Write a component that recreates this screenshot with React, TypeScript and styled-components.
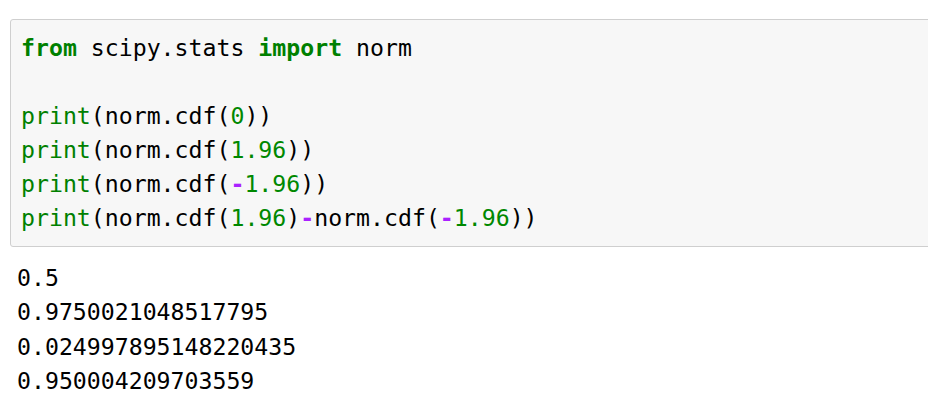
import React from "react";
import styled, { createGlobalStyle } from "styled-components";

const Global = createGlobalStyle`
  html, body { margin: 0; padding: 0; background: #ffffff; }
  body { width: 928px; height: 408px; overflow: hidden; }
`;

const Page = styled.div`
  width: 928px;
  height: 408px;
  overflow: hidden;
  padding: 19px 0 0 10px;
  box-sizing: border-box;
  font-family: "DejaVu Sans Mono", "Liberation Mono", monospace;
  font-size: 23.2px;
  line-height: 34px;
  color: #000;
`;

const InputArea = styled.div`
  width: 940px;
  box-sizing: border-box;
  background: #f7f7f7;
  border: 1px solid #cfcfcf;
  border-radius: 3px;
  padding: 11px 0 11px 10px;
`;

const CodeLine = styled.pre`
  margin: 0;
  font: inherit;
  line-height: 34px;
  white-space: pre;
  min-height: 34px;
`;

const Kw = styled.span`
  color: #008000;
  font-weight: bold;
`;

const Builtin = styled.span`
  color: #008000;
`;

const Num = styled.span`
  color: #008800;
`;

const Op = styled.span`
  color: #aa22ff;
  font-weight: bold;
`;

const Output = styled.pre`
  margin: 14px 0 0 7px;
  font: inherit;
  line-height: 34.3px;
  white-space: pre;
`;

export default function App() {
  return (
    <Page>
      <Global />
      <InputArea>
        <CodeLine>
          <Kw>from</Kw> scipy.stats <Kw>import</Kw> norm
        </CodeLine>
        <CodeLine> </CodeLine>
        <CodeLine>
          <Builtin>print</Builtin>(norm.cdf(<Num>0</Num>))
        </CodeLine>
        <CodeLine>
          <Builtin>print</Builtin>(norm.cdf(<Num>1.96</Num>))
        </CodeLine>
        <CodeLine>
          <Builtin>print</Builtin>(norm.cdf(<Op>-</Op>
          <Num>1.96</Num>))
        </CodeLine>
        <CodeLine>
          <Builtin>print</Builtin>(norm.cdf(<Num>1.96</Num>)<Op>-</Op>norm.cdf(<Op>-</Op>
          <Num>1.96</Num>))
        </CodeLine>
      </InputArea>
      <Output>
        {"0.5\n0.9750021048517795\n0.024997895148220435\n0.950004209703559"}
      </Output>
    </Page>
  );
}
